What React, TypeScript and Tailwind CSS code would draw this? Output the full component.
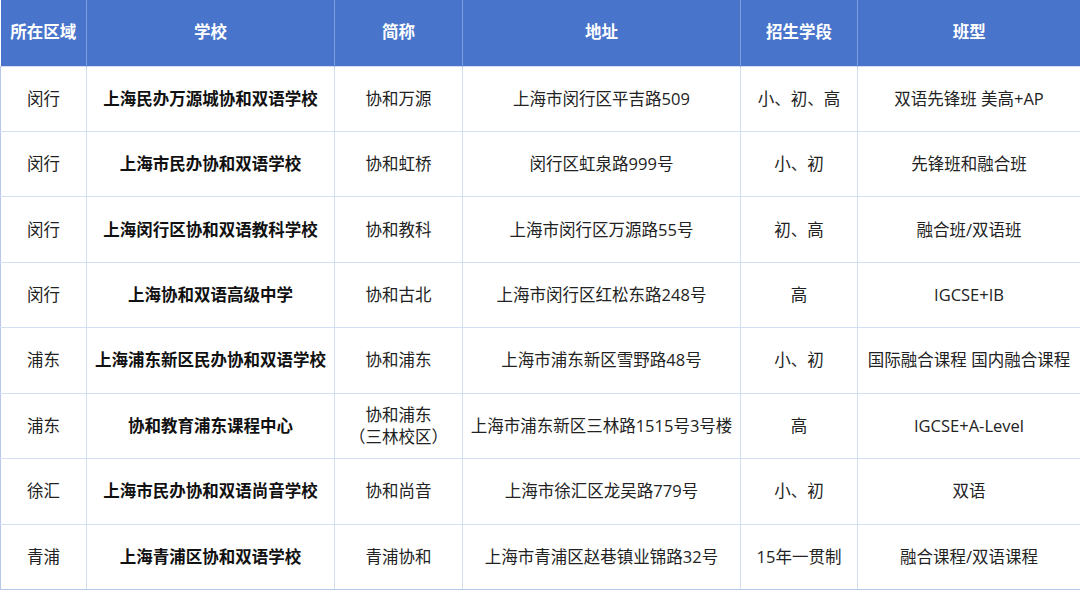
const columns = [
  { title: '所在区域', width: 86 },
  { title: '学校', width: 248 },
  { title: '简称', width: 128 },
  { title: '地址', width: 278 },
  { title: '招生学段', width: 117 },
  { title: '班型', width: 223 },
];

const rows: string[][] = [
  ['闵行', '上海民办万源城协和双语学校', '协和万源', '上海市闵行区平吉路509', '小、初、高', '双语先锋班 美高+AP'],
  ['闵行', '上海市民办协和双语学校', '协和虹桥', '闵行区虹泉路999号', '小、初', '先锋班和融合班'],
  ['闵行', '上海闵行区协和双语教科学校', '协和教科', '上海市闵行区万源路55号', '初、高', '融合班/双语班'],
  ['闵行', '上海协和双语高级中学', '协和古北', '上海市闵行区红松东路248号', '高', 'IGCSE+IB'],
  ['浦东', '上海浦东新区民办协和双语学校', '协和浦东', '上海市浦东新区雪野路48号', '小、初', '国际融合课程 国内融合课程'],
  ['浦东', '协和教育浦东课程中心', '协和浦东\n（三林校区）', '上海市浦东新区三林路1515号3号楼', '高', 'IGCSE+A-Level'],
  ['徐汇', '上海市民办协和双语尚音学校', '协和尚音', '上海市徐汇区龙吴路779号', '小、初', '双语'],
  ['青浦', '上海青浦区协和双语学校', '青浦协和', '上海市青浦区赵巷镇业锦路32号', '15年一贯制', '融合课程/双语课程'],
];

export default function App() {
  return (
    <div
      className="w-[1080px] h-[590px] overflow-hidden bg-white"
      style={{ fontFamily: '"Open Sans", "Noto Sans CJK SC", sans-serif' }}
    >
      <table className="w-[1080px] table-fixed border-collapse text-[16.5px] text-[#222222]">
        <colgroup>
          {columns.map((c) => (
            <col key={c.title} style={{ width: c.width }} />
          ))}
        </colgroup>
        <thead>
          <tr className="h-[66px] bg-[#4874cb]">
            {columns.map((c, i) => (
              <th
                key={c.title}
                className={`border-l border-[#7d9ddc] p-0 text-center font-bold text-white ${i === 0 ? 'border-l-0' : ''}`}
              >
                {c.title}
              </th>
            ))}
          </tr>
        </thead>
        <tbody>
          {rows.map((r, ri) => (
            <tr key={ri} className="h-[65.45px]">
              {r.map((cell, ci) => (
                <td
                  key={ci}
                  className={`border border-[#d5dff3] p-0 text-center leading-[22px] whitespace-pre-line ${
                    ci === 1 ? 'font-bold text-[#111111]' : ''
                  } ${ci === 0 ? 'border-l-[#b7c7ea]' : ''} ${ri === rows.length - 1 ? 'border-b-[#b7c7ea]' : ''}`}
                >
                  {cell}
                </td>
              ))}
            </tr>
          ))}
        </tbody>
      </table>
    </div>
  );
}
